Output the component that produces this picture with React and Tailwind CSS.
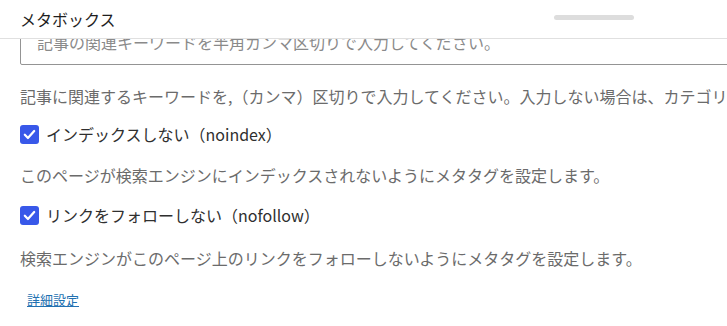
import React from 'react';

function CheckIcon() {
  return (
    <span className="flex h-[19px] w-[19px] shrink-0 items-center justify-center rounded-[3px] bg-[#3858e9]">
      <svg width="15" height="15" viewBox="0 0 24 24" fill="none">
        <path d="M4.5 12.5l5 5L19.5 6.5" stroke="#fff" strokeWidth="3.6" strokeLinecap="round" strokeLinejoin="round" />
      </svg>
    </span>
  );
}

function CheckRow({ label, className }) {
  return (
    <label className={`flex h-[20px] items-center gap-[7px] text-[16px] text-[#2f2f2f] ${className}`}>
      <CheckIcon />
      <span className="whitespace-nowrap leading-[20px]">{label}</span>
    </label>
  );
}

export default function App() {
  return (
    <div
      className="h-[326px] w-[727px] overflow-hidden bg-white"
      style={{ fontFamily: '"Noto Sans CJK JP", "Noto Sans", sans-serif' }}
    >
      {/* header */}
      <div className="relative z-10 flex h-[39px] items-center border-b border-[#e0e0e0] bg-white pl-5">
        <span className="text-[16px] leading-none text-[#1e1e1e]">メタボックス</span>
        <div className="ml-auto mr-[93px] mb-[3px] h-[5px] w-[80px] rounded-full bg-[#dddddd]" />
      </div>

      {/* body */}
      <div className="overflow-hidden px-5">
        <textarea
          readOnly
          placeholder="記事の関連キーワードを半角カンマ区切りで入力してください。"
          className="-mt-[17px] block h-[43px] w-[740px] resize-none overflow-hidden rounded-[2px] border border-[#949494] px-4 pt-[7px] pb-[10px] text-[16px] leading-[24px] placeholder:text-[#8a8a8a]"
        />

        <p className="mt-[19px] whitespace-nowrap text-[16px] leading-[24px] text-[#6b6b6b]">
          記事に関連するキーワードを,（カンマ）区切りで入力してください。入力しない場合は、カテゴリーやタグが使用されます。
        </p>

        <CheckRow label="インデックスしない（noindex）" className="mt-4" />

        <p className="mt-[19px] whitespace-nowrap text-[16px] leading-[24px] text-[#6b6b6b]">
          このページが検索エンジンにインデックスされないようにメタタグを設定します。
        </p>

        <CheckRow label="リンクをフォローしない（nofollow）" className="mt-[18px]" />

        <p className="mt-[21px] whitespace-nowrap text-[16px] leading-[24px] text-[#6b6b6b]">
          検索エンジンがこのページ上のリンクをフォローしないようにメタタグを設定します。
        </p>

        <a href="#" className="ml-[7px] mt-[20px] block w-fit text-[13px] leading-[20px] text-[#2271b1] underline">
          詳細設定
        </a>
      </div>
    </div>
  );
}
